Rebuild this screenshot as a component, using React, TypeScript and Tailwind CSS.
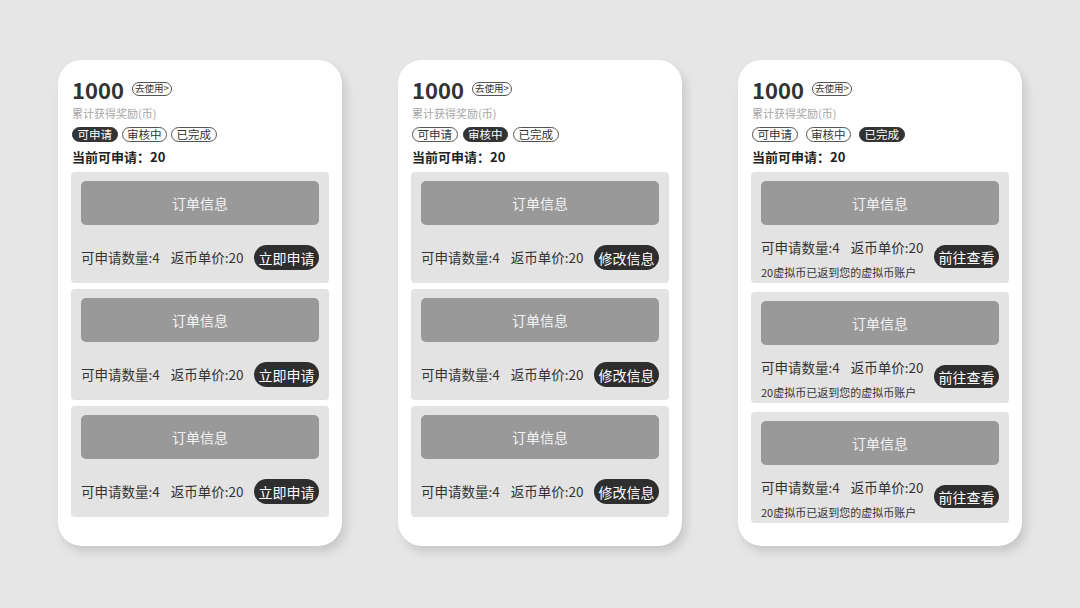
import React from 'react';

const TABS = ['可申请', '审核中', '已完成'];

type CardCfg = {
  active: number;
  btn: string;
  done: boolean;
};

const CARDS: CardCfg[] = [
  { active: 0, btn: '立即申请', done: false },
  { active: 1, btn: '修改信息', done: false },
  { active: 2, btn: '前往查看', done: true },
];

function Tab({ label, active }: { label: string; active: boolean }) {
  return (
    <span
      className={
        active
          ? 'flex h-[15px] items-center rounded-full border border-[#333] bg-[#333] px-[4.5px] text-[11.5px] leading-none text-white'
          : 'flex h-[15px] items-center rounded-full border border-[#555] bg-white px-[4.5px] text-[11.5px] leading-none text-[#333]'
      }
    >
      {label}
    </span>
  );
}

function Item({ btn, done }: { btn: string; done: boolean }) {
  return (
    <div className="h-[111px] rounded-[4px] bg-[#e3e3e3] px-[10px] pt-[9px]">
      <div className="flex h-[44px] items-center justify-center rounded-[5px] bg-[#999999] text-[14px] text-[#f4f4f4]">
        订单信息
      </div>
      {done ? (
        <div className="mt-[14px] flex justify-between">
          <div className="flex flex-col">
            <div className="flex h-[18px] items-center text-[13.5px] leading-none text-[#333]">
              <span>可申请数量:4</span>
              <span className="ml-[11px]">返币单价:20</span>
            </div>
            <div className="mt-[8px] h-[14px] text-[11px] leading-[14px] text-[#333]">
              20虚拟币已返到您的虚拟币账户
            </div>
          </div>
          <span className="mt-[6px] flex h-[23px] items-center rounded-full bg-[#2e2e2e] px-[4.5px] text-[14px] leading-none text-white">
            {btn}
          </span>
        </div>
      ) : (
        <div className="mt-[20px] flex h-[25px] items-center justify-between">
          <div className="flex items-center text-[13.5px] leading-none text-[#333]">
            <span>可申请数量:4</span>
            <span className="ml-[11px]">返币单价:20</span>
          </div>
          <span className="flex h-[25px] items-center rounded-full bg-[#2e2e2e] px-[4.5px] text-[14px] leading-none text-white">
            {btn}
          </span>
        </div>
      )}
    </div>
  );
}

function Card({ cfg }: { cfg: CardCfg }) {
  const tabGap = cfg.active === 0 ? 'gap-[4px]' : cfg.active === 1 ? 'gap-[5px]' : 'gap-[8px]';
  const itemGap = cfg.done ? 'gap-[9px]' : 'gap-[6px]';
  return (
    <div className="flex h-[486px] w-[284px] flex-col rounded-[24px] bg-white px-[13px] pt-[17px] shadow-[4px_6px_10px_rgba(0,0,0,0.13)]">
      <div className="pl-[1px]">
        <div className="flex h-[24px] items-center gap-[8px]">
          <span className="text-[22px] font-bold leading-none text-[#333]">1000</span>
          <span className="flex h-[14px] items-center rounded-full border border-[#555] px-[2px] text-[9.5px] leading-none text-[#333]">
            去使用&gt;
          </span>
        </div>
        <div className="mt-[4px] text-[11px] leading-[16px] text-[#a6a6a6]">累计获得奖励(币)</div>
        <div className={`mt-[6px] flex ${tabGap}`}>
          {TABS.map((t, i) => (
            <Tab key={t} label={t} active={i === cfg.active} />
          ))}
        </div>
        <div className="mt-[6px] text-[13px] font-bold leading-[18px] text-[#222]">当前可申请：20</div>
      </div>
      <div className={`mt-[6px] flex flex-col ${itemGap}`}>
        <Item btn={cfg.btn} done={cfg.done} />
        <Item btn={cfg.btn} done={cfg.done} />
        <Item btn={cfg.btn} done={cfg.done} />
      </div>
    </div>
  );
}

export default function App() {
  return (
    <div className="flex h-[608px] w-[1080px] justify-center gap-[56px] bg-[#e6e6e6] pt-[60px] font-['Noto_Sans_CJK_SC','Noto_Sans',sans-serif]">
      {CARDS.map((c, i) => (
        <Card key={i} cfg={c} />
      ))}
    </div>
  );
}
